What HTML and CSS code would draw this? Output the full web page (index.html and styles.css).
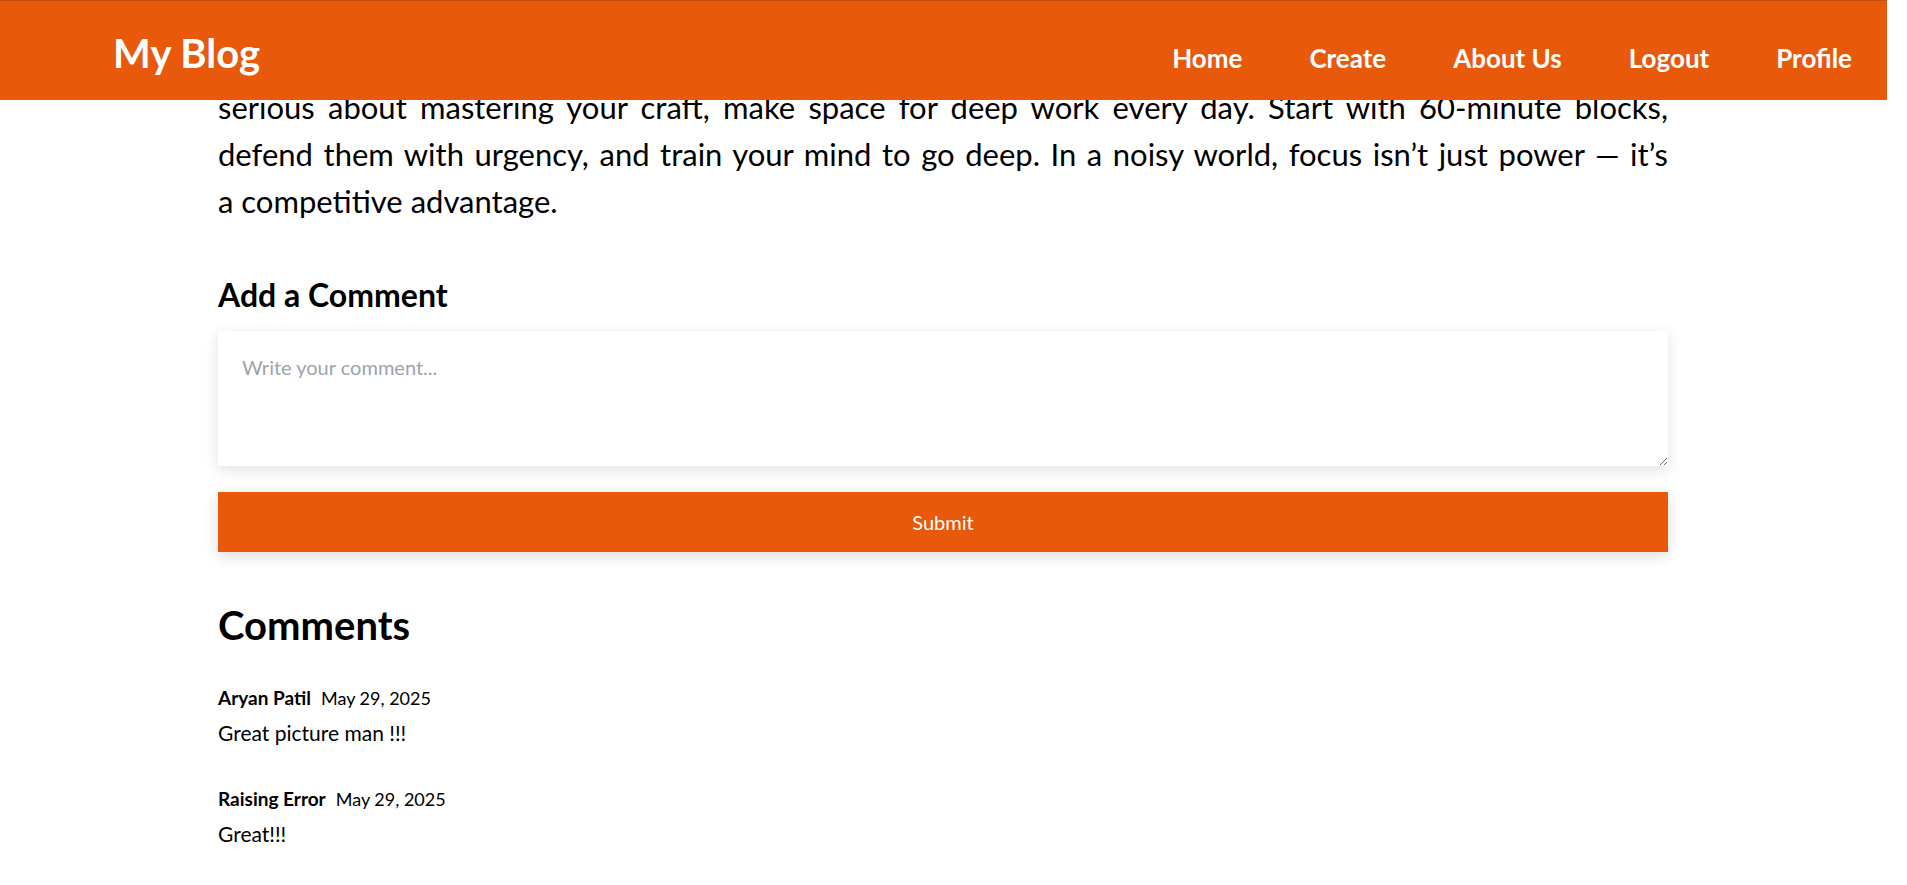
FILE: index.html
```html
<!DOCTYPE html>
<html lang="en">
<head>
<meta charset="utf-8">
<title>My Blog</title>
<link rel="stylesheet" href="styles.css">
</head>
<body>
<header class="site-header">
  <a class="logo" href="#">My Blog</a>
  <nav class="nav">
    <a href="#">Home</a>
    <a href="#">Create</a>
    <a href="#">About Us</a>
    <a href="#">Logout</a>
    <a href="#">Profile</a>
  </nav>
</header>
<main class="post">
  <p class="post-body">
    <span class="line just">serious about mastering your craft, make space for deep work every day. Start with 60-minute blocks,</span>
    <span class="line just">defend them with urgency, and train your mind to go deep. In a noisy world, focus isn’t just power — it’s</span>
    <span class="line">a competitive advantage.</span>
  </p>

  <section class="comment-form">
    <h3 class="form-title">Add a Comment</h3>
    <textarea class="comment-input" placeholder="Write your comment..."></textarea>
    <button class="submit-btn" type="button">Submit</button>
  </section>

  <section class="comments">
    <h2 class="comments-title">Comments</h2>
    <div class="comment">
      <div class="comment-meta"><strong class="comment-author">Aryan Patil</strong><span class="comment-date">May 29, 2025</span></div>
      <p class="comment-text">Great picture man !!!</p>
    </div>
    <div class="comment">
      <div class="comment-meta"><strong class="comment-author">Raising Error</strong><span class="comment-date">May 29, 2025</span></div>
      <p class="comment-text">Great!!!</p>
    </div>
  </section>
</main>
</body>
</html>
```

FILE: styles.css
```css
* { box-sizing: border-box; }

html, body {
  margin: 0;
  background: #fff;
}

body {
  padding-right: 21px;
  font-family: Lato, "Open Sans", "Liberation Sans", sans-serif;
  color: #000;
  overflow: hidden;
}

.site-header {
  position: fixed;
  top: 0;
  left: 0;
  right: 20px;
  height: 100px;
  background: #e8590c;
  border-top: 1px solid #c84c0b;
  display: flex;
  align-items: baseline;
  justify-content: space-between;
  padding: 28px 35px 0 113px;
  z-index: 10;
}

.logo {
  color: #fff;
  text-decoration: none;
  font-weight: 700;
  font-size: 40px;
  line-height: 1.2;
}

.nav {
  display: flex;
  align-items: baseline;
  gap: 67px;
}

.nav a {
  color: #fff;
  text-decoration: none;
  font-weight: 700;
  font-size: 26px;
  line-height: 1.2;
}

.post {
  width: 1450px;
  margin: 0 auto;
  padding-top: 84px;
}

.post-body {
  margin: 0;
  font-size: 31px;
  line-height: 47px;
  text-align: justify;
}

.line { display: block; }
.line.just { text-align-last: justify; }

.comment-form {
  margin-top: 51px;
}

.form-title {
  margin: 0 0 17px;
  font-size: 32px;
  font-weight: 700;
  line-height: 1.2;
}

.comment-input {
  display: block;
  width: 100%;
  height: 135px;
  padding: 24px;
  border: none;
  outline: none;
  border-radius: 0;
  background: #fff;
  font-family: inherit;
  font-size: 20px;
  line-height: 1.2;
  color: #000;
  box-shadow: 0 4px 14px rgba(0, 0, 0, 0.12);
}

.comment-input::placeholder {
  color: #9ca3af;
}

.submit-btn {
  display: block;
  width: 100%;
  height: 60px;
  margin-top: 26px;
  border: none;
  background: #e8590c;
  color: #fff;
  font-family: inherit;
  font-size: 20px;
  box-shadow: 0 4px 14px rgba(0, 0, 0, 0.14);
  cursor: pointer;
}

.comments {
  margin-top: 49px;
}

.comments-title {
  margin: 0 0 36px;
  font-size: 40px;
  font-weight: 700;
  line-height: 1.2;
}

.comment {
  margin-bottom: 39px;
}

.comment-meta {
  display: flex;
  align-items: baseline;
  gap: 10px;
  font-size: 19px;
  line-height: 25px;
}

.comment-author {
  font-weight: 700;
}

.comment-date {
  font-size: 18px;
}

.comment-text {
  margin: 8px 0 0;
  font-size: 21px;
  line-height: 28px;
}
```
